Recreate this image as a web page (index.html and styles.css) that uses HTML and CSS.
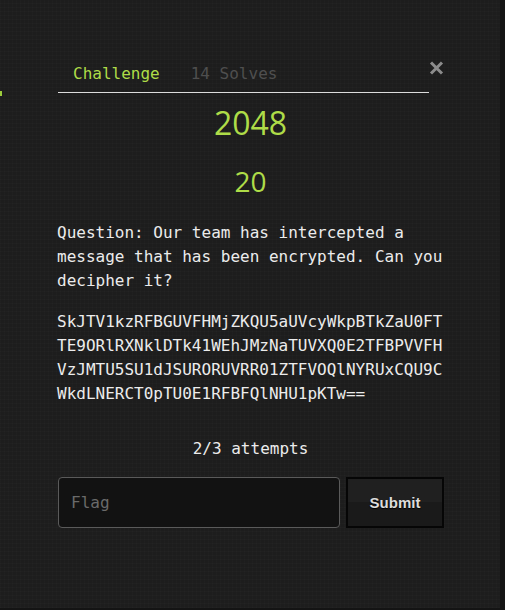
FILE: index.html
```html
<!DOCTYPE html>
<html lang="en">
<head>
<meta charset="utf-8">
<title>Challenge</title>
<link rel="stylesheet" href="styles.css">
</head>
<body>
<div class="screen">
  <span class="edge-mark"></span>
  <div class="modal">
    <div class="head">
      <nav class="tabs">
        <span class="tab active">Challenge</span>
        <span class="tab">14 Solves</span>
      </nav>
      <button class="close" aria-label="Close">
        <svg width="15" height="14" viewBox="0 0 15 14"><path d="M2 1.5 L13 12.5 M13 1.5 L2 12.5" stroke="#8c8c8c" stroke-width="3" stroke-linecap="butt"/></svg>
      </button>
    </div>
    <h2 class="name">2048</h2>
    <h3 class="value">20</h3>
    <p class="desc">Question: Our team has intercepted a message that has been encrypted. Can you decipher it?</p>
    <p class="cipher">SkJTV1kzRFBGUVFHMjZKQU5aUVcyWkpBTkZaU0FTTE9ORlRXNklDTk41WEhJMzNaTUVXQ0E2TFBPVVFHVzJMTU5SU1dJSURORUVRR01ZTFVOQlNYRUxCQU9CWkdLNERCT0pTU0E1RFBFQlNHU1pKTw==</p>
    <p class="attempts">2/3 attempts</p>
    <form class="submit-row">
      <input class="flag" type="text" placeholder="Flag">
      <button class="submit" type="button">Submit</button>
    </form>
  </div>
</div>
</body>
</html>
```
FILE: styles.css
```css
html, body {
  margin: 0;
  padding: 0;
  background: #141414;
}
.screen {
  position: relative;
  width: 500px;
  height: 608px;
  background-color: #1d1d1d;
  background-image:
    repeating-linear-gradient(0deg, rgba(255,255,255,0.012) 0 1px, transparent 1px 4px),
    repeating-linear-gradient(90deg, rgba(255,255,255,0.012) 0 1px, transparent 1px 4px);
  overflow: hidden;
  font-family: "DejaVu Sans Mono", monospace;
  color: #ececec;
}
.edge-mark {
  position: absolute;
  left: 0;
  top: 91px;
  width: 2px;
  height: 5px;
  background: #9ccc3c;
}
.modal {
  width: 387px;
  margin-left: 57px;
  padding-top: 62px;
}
.head {
  display: flex;
  align-items: flex-start;
}
.tabs {
  width: 371px;
  margin-left: 1px;
  display: flex;
  border-bottom: 1px solid #dcdcdc;
  padding-bottom: 6px;
  font-size: 16px;
  line-height: 24px;
}
.tab {
  padding: 0 16px 0 15px;
  color: #4f4f4f;
}
.tab.active {
  color: #aedc48;
}
.close {
  margin: -1px 0 0 0;
  padding: 0;
  border: 0;
  background: none;
  width: 15px;
  height: 14px;
  display: block;
}
.close svg {
  display: block;
}
.name {
  margin: 11px 0 0;
  font-family: "Open Sans", sans-serif;
  font-weight: 400;
  font-size: 32px;
  line-height: 38px;
  text-align: center;
  color: #aedc48;
}
.value {
  margin: 22px 0 0;
  font-family: "Open Sans", sans-serif;
  font-weight: 400;
  font-size: 28px;
  line-height: 34px;
  text-align: center;
  color: #aedc48;
}
.desc {
  margin: 23px 0 0;
  font-size: 16px;
  line-height: 24px;
}
.cipher {
  margin: 17px 0 0;
  font-size: 16px;
  line-height: 24px;
  word-break: break-all;
}
.attempts {
  margin: 31px 0 0;
  font-size: 16px;
  line-height: 24px;
  text-align: center;
}
.submit-row {
  margin: 16px 0 0 1px;
  display: flex;
  gap: 6px;
}
.flag {
  box-sizing: border-box;
  width: 282px;
  height: 51px;
  margin: 0;
  padding: 0 12px;
  background: #121212;
  border: 1px solid #5a5a5a;
  border-radius: 4px;
  color: #ececec;
  font-family: "DejaVu Sans Mono", monospace;
  font-size: 16px;
  outline: none;
}
.flag::placeholder {
  color: #6a6a6a;
}
.submit {
  box-sizing: border-box;
  width: 98px;
  height: 51px;
  margin: 0;
  border: 2px solid #060606;
  background: linear-gradient(#202020 0 50%, #1a1a1a 50% 100%);
  color: #dcdcdc;
  font-family: "Liberation Sans", Arial, sans-serif;
  font-weight: 700;
  font-size: 15px;
  text-shadow: 0 1px 1px #000;
}
```
